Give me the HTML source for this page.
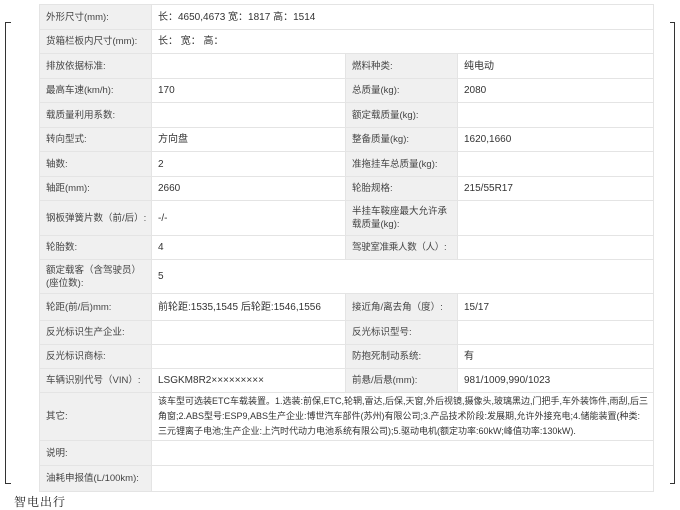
<!DOCTYPE html>
<html><head><meta charset="utf-8"><style>
body{margin:0;width:680px;height:510px;background:#fff;position:relative;overflow:hidden;font-family:"Liberation Sans","Noto Sans CJK SC",sans-serif;font-size:10px;color:#333}
table{position:absolute;left:39px;top:4px;width:614px;border-collapse:collapse;table-layout:fixed}
td{border:1px solid #e4e4e4;padding:0 4px 0 6px;line-height:13px;vertical-align:middle;overflow:hidden}
td.l{background:#f0f0f0;color:#444;font-size:9.5px}
td.v{background:#fff}
.bl{position:absolute;left:5px;top:22px;width:5px;height:460px;border:1px solid #333;border-right:none}
.br{position:absolute;left:670px;top:22px;width:4px;height:460px;border:1px solid #333;border-left:none}
.wm{position:absolute;left:14px;top:493px;font-family:"Noto Serif CJK SC",serif;font-size:12px;color:#222;letter-spacing:1px}
</style></head><body>
<div class="bl"></div><div class="br"></div>
<table>
<colgroup><col style="width:112px"><col style="width:194px"><col style="width:112px"><col style="width:196px"></colgroup>
<tr style="height:25px"><td class="l">外形尺寸(mm):</td><td class="v" colspan="3">长：4650,4673 宽：1817 高：1514</td></tr>
<tr style="height:24px"><td class="l">货箱栏板内尺寸(mm):</td><td class="v" colspan="3">长： 宽： 高：</td></tr>
<tr style="height:25px"><td class="l">排放依据标准:</td><td class="v"></td><td class="l">燃料种类:</td><td class="v">纯电动</td></tr>
<tr style="height:24px"><td class="l">最高车速(km/h):</td><td class="v">170</td><td class="l">总质量(kg):</td><td class="v">2080</td></tr>
<tr style="height:25px"><td class="l">载质量利用系数:</td><td class="v"></td><td class="l">额定载质量(kg):</td><td class="v"></td></tr>
<tr style="height:24px"><td class="l">转向型式:</td><td class="v">方向盘</td><td class="l">整备质量(kg):</td><td class="v">1620,1660</td></tr>
<tr style="height:25px"><td class="l">轴数:</td><td class="v">2</td><td class="l">准拖挂车总质量(kg):</td><td class="v"></td></tr>
<tr style="height:24px"><td class="l">轴距(mm):</td><td class="v">2660</td><td class="l">轮胎规格:</td><td class="v">215/55R17</td></tr>
<tr style="height:35px"><td class="l">钢板弹簧片数（前/后）:</td><td class="v">-/-</td><td class="l">半挂车鞍座最大允许承载质量(kg):</td><td class="v"></td></tr>
<tr style="height:24px"><td class="l" style="white-space:nowrap">轮胎数:</td><td class="v">4</td><td class="l" style="white-space:nowrap;letter-spacing:-0.3px">驾驶室准乘人数（人）:</td><td class="v"></td></tr>
<tr style="height:34px"><td class="l">额定载客（含驾驶员）(座位数):</td><td class="v" colspan="3">5</td></tr>
<tr style="height:27px"><td class="l">轮距(前/后)mm:</td><td class="v">前轮距:1535,1545 后轮距:1546,1556</td><td class="l">接近角/离去角（度）:</td><td class="v">15/17</td></tr>
<tr style="height:24px"><td class="l">反光标识生产企业:</td><td class="v"></td><td class="l">反光标识型号:</td><td class="v"></td></tr>
<tr style="height:24px"><td class="l">反光标识商标:</td><td class="v"></td><td class="l">防抱死制动系统:</td><td class="v">有</td></tr>
<tr style="height:24px"><td class="l">车辆识别代号（VIN）:</td><td class="v">LSGKM8R2×××××××××</td><td class="l">前悬/后悬(mm):</td><td class="v">981/1009,990/1023</td></tr>
<tr style="height:48px"><td class="l">其它:</td><td class="v" colspan="3" style="font-size:9px;line-height:15px">该车型可选装ETC车载装置。1.选装:前保,ETC,轮辋,雷达,后保,天窗,外后视镜,摄像头,玻璃黑边,门把手,车外装饰件,雨刮,后三角窗;2.ABS型号:ESP9,ABS生产企业:博世汽车部件(苏州)有限公司;3.产品技术阶段:发展期,允许外接充电;4.储能装置(种类:三元锂离子电池;生产企业:上汽时代动力电池系统有限公司);5.驱动电机(额定功率:60kW;峰值功率:130kW).</td></tr>
<tr style="height:25px"><td class="l">说明:</td><td class="v" colspan="3"></td></tr>
<tr style="height:26px"><td class="l">油耗申报值(L/100km):</td><td class="v" colspan="3"></td></tr>
</table>
<div class="wm">智电出行</div>
</body></html>
